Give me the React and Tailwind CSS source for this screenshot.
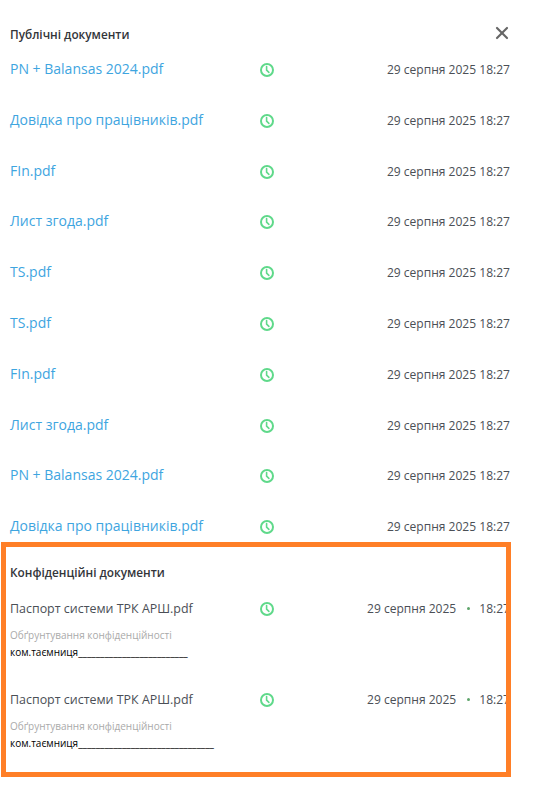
import React from 'react';
import { X } from 'lucide-react';

const publicDocs = [
    'PN + Balansas 2024.pdf',
    'Довідка про працівників.pdf',
    'FIn.pdf',
    'Лист згода.pdf',
    'TS.pdf',
    'TS.pdf',
    'FIn.pdf',
    'Лист згода.pdf',
    'PN + Balansas 2024.pdf',
    'Довідка про працівників.pdf',
];

const privateDocs = [
    { name: 'Паспорт системи ТРК АРШ.pdf', reason: 'ком.таємниця_________________________' },
    { name: 'Паспорт системи ТРК АРШ.pdf', reason: 'ком.таємниця_______________________________' },
];

const ClockIcon = () => (
    <svg width="14" height="14" viewBox="0 0 14 14" fill="none" stroke="#5fd98a" strokeWidth="2" strokeLinecap="round" className="block">
        <circle cx="7" cy="7" r="6" />
        <path d="M6.6 3.6V7.2L8.9 9.4" strokeWidth="1.6" />
    </svg>
);

const App = () => {
    return (
        <div className="w-[552px] h-[797px] bg-white overflow-hidden font-['Open_Sans',sans-serif]">
            <div className="w-[511px] pl-[10px] pt-[24px] flex items-center justify-between h-[44px]">
                <h2 className="text-[11.8px] font-semibold text-[#33353a] leading-[18px]">Публічні документи</h2>
                <X size={20} strokeWidth={2.6} className="text-[#666] mr-[-1px] mb-[2px]" />
            </div>

            <div className="w-[510px] pl-[10px] pt-[14.5px]">
                {publicDocs.map((name, idx) => (
                    <div key={idx} className="flex items-center h-[21px] mb-[29.8px] last:mb-0">
                        <span className="w-[250px] text-[14px] leading-[21px] text-[#3ea5df] whitespace-nowrap mt-[-1px]">{name}</span>
                        <div className="mt-[2px]">
                            <ClockIcon />
                        </div>
                        <span className="ml-auto mt-[2px] text-[12.05px] text-[#4b4f56] whitespace-nowrap">29 серпня 2025 18:27</span>
                    </div>
                ))}
            </div>

            <section className="mt-[5.3px] ml-[1px] w-[510px] h-[235px] border-[5px] border-[#ff7f27] overflow-hidden pl-[4px] pt-[16px]">
                <h2 className="text-[11.8px] font-semibold text-[#33353a] leading-[18px] mb-[19px]">Конфіденційні документи</h2>
                <div className="flex flex-col gap-[32px]">
                    {privateDocs.map((doc, idx) => (
                        <div key={idx}>
                            <div className="flex items-center h-[18px] w-[520px]">
                                <span className="w-[250px] text-[12.45px] leading-[18px] text-[#4b4f56] whitespace-nowrap">{doc.name}</span>
                                <ClockIcon />
                                <span className="ml-[93px] text-[12.05px] text-[#4b4f56] whitespace-nowrap">29 серпня 2025</span>
                                <span className="ml-[11px] w-[3px] h-[3px] rounded-full bg-[#5fa56b]"></span>
                                <span className="ml-[9px] text-[12.05px] text-[#4b4f56] whitespace-nowrap">18:27</span>
                            </div>
                            <div className="mt-[10px] text-[10px] leading-[14px] text-[#aaaaaa]">Обґрунтування конфіденційності</div>
                            <div className="mt-[3px] text-[10px] leading-[14px] text-black whitespace-nowrap">{doc.reason}</div>
                        </div>
                    ))}
                </div>
            </section>
        </div>
    );
};

export default App;
